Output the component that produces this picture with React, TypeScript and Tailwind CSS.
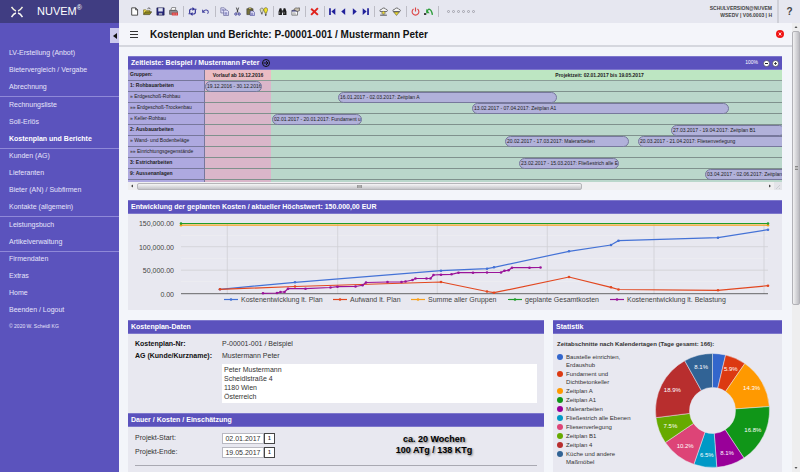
import type { ReactNode } from 'react';

const menu = [
  ['LV-Erstellung (Anbot)', 'Bietervergleich / Vergabe', 'Abrechnung'],
  ['Rechnungsliste', 'Soll-Erlös', 'Kostenplan und Berichte'],
  ['Kunden (AG)', 'Lieferanten', 'Bieter (AN) / Subfirmen', 'Kontakte (allgemein)'],
  ['Leistungsbuch', 'Artikelverwaltung'],
  ['Firmendaten', 'Extras', 'Home', 'Beenden / Logout'],
];

const toolbar: { name: string; art: ReactNode }[][] = [
  [
    { name: 'Neu', art: <path d="M3 1.5h7l3.5 3.5v9.5H3zM10 1.5V5h3.5" fill="#fff" stroke="#333" strokeWidth="1.5" /> },
    {
      name: 'Öffnen',
      art: (
        <>
          <path d="M1 13V5h4l1 1h6v3" fill="#f4e04a" stroke="#55501a" />
          <path d="M1 13.5 4 8.500h11.500L12 13.500z" fill="#8a8420" stroke="#33300c" />
          <path d="M8 3c2-2 4-1.500 5.500 1" fill="none" stroke="#222" strokeWidth="1.300" />
        </>
      ),
    },
    {
      name: 'Speichern',
      art: (
        <>
          <path d="M1.500 1.500h13v13h-13z" fill="#26267c" stroke="#15153f" />
          <path d="M4 2h8v6H4z" fill="#dfe3ef" />
          <path d="M5 10.500h6V14H5z" fill="#9da0b5" />
        </>
      ),
    },
    {
      name: 'Drucken',
      art: (
        <>
          <path d="M5 1h7l-1 5H3z" fill="#fff" stroke="#444" />
          <path d="M1 6h13l1 2v5H1z" fill="#8c8c92" stroke="#333" />
          <path d="M5 10h11v5H5z" fill="#d63434" />
          <path d="M6.500 12.500h8" stroke="#fff" strokeDasharray="2 1" />
        </>
      ),
    },
  ],
  [
    {
      name: 'Aktualisieren',
      art: (
        <>
          <path d="M3 11V5.500L5 3.500h4M13 5v5.500l-2 2H7" fill="none" stroke="#2a2a92" strokeWidth="2" />
          <path d="M8 0v7l4-3.500zM8 9v7l-4-3.500z" fill="#2a2a92" />
          <path d="M1 11h4v2H1zM11 3h4v2h-4z" fill="#2a2a92" />
        </>
      ),
    },
    {
      name: 'Rückgängig',
      art: (
        <>
          <path d="M4 8c3-4 9-3 9 1 0 1-.5 2-1.500 3" fill="none" stroke="#4646a0" strokeWidth="1.800" />
          <path d="M2 4v6h6z" fill="#4646a0" />
        </>
      ),
    },
  ],
  [
    {
      name: 'Kopieren',
      art: (
        <>
          <path d="M1.500 1.500h6l2 2v7h-8z" fill="#eef" stroke="#3b3b7c" />
          <path d="M6.500 5.500h6l2.500 2.500v7H6.500z" fill="#eef" stroke="#3b3b7c" />
          <path d="M3 4.500h4M3 6.500h3M8 9.500h5M8 11.500h5M8 13h5" stroke="#5a5aa8" />
        </>
      ),
    },
    {
      name: 'Ausschneiden',
      art: (
        <>
          <path d="M6 1l3 9M10 1 7 10" stroke="#333" strokeWidth="1.500" />
          <circle cx="5" cy="12.500" r="2" fill="none" stroke="#2b2b8c" strokeWidth="1.500" />
          <circle cx="11" cy="12.500" r="2" fill="none" stroke="#2b2b8c" strokeWidth="1.500" />
        </>
      ),
    },
    {
      name: 'Einfügen',
      art: (
        <>
          <path d="M1.500 3h11v10.500h-11z" fill="#77733a" stroke="#333" />
          <path d="M4.500 1.500h5v3h-5z" fill="#e8d95a" stroke="#333" />
          <path d="M7.500 7h5l2.500 2.500V15H7.500z" fill="#eef" stroke="#2b2b8c" />
          <path d="M9 11h4M9 13h4" stroke="#2b2b8c" />
        </>
      ),
    },
    {
      name: 'Suchhilfe',
      art: (
        <>
          <path d="M2 5c0-4 6-4 6 0 0 2-1.500 3-1.500 5h-3C3.500 8 2 7 2 5z" fill="#dcdcc0" stroke="#444" />
          <path d="M8.500 5c0-5 7-5 7 0 0 2-2 3-2 6h-3c0-3-2-4-2-6z" fill="#f0e326" stroke="#55501a" />
          <path d="M3.500 12h3M10.500 13h3M11 15h2" stroke="#222" strokeWidth="1.500" />
        </>
      ),
    },
  ],
  [
    {
      name: 'Suchen',
      art: (
        <>
          <path d="M3 2h3l1 4v8H1V8zM13 2h-3L9 6v8h6V8z" fill="#1c1c1c" />
          <path d="M7 6h2v4H7z" fill="#444" />
          <path d="M3 8.500v4M11 8.500v4" stroke="#aaa" />
        </>
      ),
    },
    {
      name: 'Eigenschaften',
      art: (
        <>
          <path d="M1.500 6h10v8.500h-10z" fill="#fff" stroke="#333" />
          <path d="M1.500 6h10v2h-10z" fill="#34347c" />
          <path d="M5 5c1-3 4-4 6-3l4-.500v5L11 8 8 6z" fill="#c9c0ae" stroke="#333" />
          <path d="M3 10.500h5M3 12.500h6" stroke="#777" />
        </>
      ),
    },
  ],
  [{ name: 'Löschen', art: <path d="M2 3l12 11M14 2 2 14" stroke="#e0221c" strokeWidth="3.500" /> }],
  [
    { name: 'Erster', art: <path d="M2 2h3v12H2zM13 2v12L6 8z" fill="#20209a" /> },
    { name: 'Zurück', art: <path d="M11 2v12L4 8z" fill="#20209a" /> },
    { name: 'Weiter', art: <path d="M5 2v12l7-6z" fill="#20209a" /> },
    { name: 'Letzter', art: <path d="M11 2h3v12h-3zM3 2v12l7-6z" fill="#20209a" /> },
  ],
  [
    {
      name: 'Hochladen',
      art: (
        <>
          <path d="M2 8c-1-3 1-4 3-4 1-3 6-3 7 0 3 0 4 3 2 4z" fill="#f4f4f4" stroke="#444" strokeWidth="1.300" />
          <path d="M8 7l4 4h-2.500v2h-3v-2H4z" fill="#eedb30" stroke="#555" strokeWidth=".8" />
          <path d="M2 14.500h12" stroke="#333" strokeWidth="1.500" />
        </>
      ),
    },
    {
      name: 'Herunterladen',
      art: (
        <>
          <path d="M2 8c-1-3 1-4 3-4 1-3 6-3 7 0 3 0 4 3 2 4z" fill="#f4f4f4" stroke="#444" strokeWidth="1.300" />
          <path d="M3 9h10l-5 6z" fill="#eedb30" stroke="#444" />
        </>
      ),
    },
  ],
  [
    {
      name: 'Beenden',
      art: <path d="M4.500 3.500a6 6 0 1 0 7 0M8 1v7" fill="none" stroke="#dc4545" strokeWidth="2" />,
    },
    {
      name: 'Verlauf',
      art: (
        <>
          <path d="M5 9c2-8 8-6 10 5" fill="none" stroke="#2f9f3d" strokeWidth="2.500" />
          <path d="M0 11h4v3H0z" fill="#222" />
          <path d="M4 3v8h6z" fill="#2f9f3d" />
        </>
      ),
    },
  ],
];

const dayWidth = 4.76;

// from / to are days counted from 19.12.2016
const groups = [
  { name: '1: Rohbauarbeiten', bold: true, bars: [{ from: 0, to: 12, text: '19.12.2016 - 30.12.2016' }] },
  { name: '» Erdgeschoß-Rohbau', bars: [{ from: 28, to: 74, text: '16.01.2017 - 02.03.2017: Zeitplan A' }] },
  { name: '»» Erdgeschoß-Trockenbau', bars: [{ from: 56, to: 110, text: '13.02.2017 - 07.04.2017: Zeitplan A1' }] },
  { name: '» Keller-Rohbau', bars: [{ from: 14, to: 33, text: '02.01.2017 - 20.01.2017: Fundament u' }] },
  { name: '2: Ausbauarbeiten', bold: true, bars: [{ from: 98, to: 122, text: '27.03.2017 - 19.04.2017: Zeitplan B1' }] },
  {
    name: '» Wand- und Bodenbeläge',
    bars: [
      { from: 63, to: 89, text: '20.02.2017 - 17.03.2017: Malerarbeiten' },
      { from: 91, to: 124, text: '20.03.2017 - 21.04.2017: Fliesenverlegung' },
    ],
  },
  { name: '»» Einrichtungsgegenstände', bars: [] },
  { name: '3: Estricharbeiten', bold: true, bars: [{ from: 66, to: 87, text: '23.02.2017 - 15.03.2017: Fließestrich alle E' }] },
  { name: '9: Aussenanlagen', bold: true, bars: [{ from: 105, to: 166, text: '03.04.2017 - 02.06.2017: Zeitplan' }] },
];

const lines = [
  {
    color: '#f9a11b',
    points: [[53, 11.2], [640, 11.2]],
  },
  {
    color: '#1f9d2b',
    points: [[53, 9.5], [640, 9.5]],
  },
  {
    color: '#4472d6',
    points: [[92, 75.300], [167, 68.300], [313, 56.700], [359, 54.700], [366, 53.300], [441, 37.300], [483, 31], [490.500, 26.700], [590, 23.700], [640, 15.700]],
  },
  {
    color: '#e2471f',
    points: [[92, 75.300], [167, 72.500], [313, 68], [359, 77.500], [366, 78.700], [441, 63], [483, 73.300], [490.500, 75.500], [590, 76.300], [640, 71.700]],
  },
  {
    color: '#9a1499',
    points: [
      [135, 79.300], [149, 79], [152.500, 78], [156.500, 78], [160, 74.700], [177.500, 74.700], [202.500, 73.500], [209.500, 72.700], [227.500, 72.500],
      [234.500, 71.300], [238, 68.500], [259.500, 68], [273.500, 68], [277.500, 67.500], [284.500, 66], [287.500, 64.500], [298.500, 64.500],
      [302.500, 64.500], [305.500, 61], [313, 60.700], [323.500, 60.300], [330.500, 58.700], [345, 58.700], [359, 58.500], [373, 58.500],
      [376.500, 56.700], [380.500, 56.300], [384, 53.700], [401.500, 53.700], [412.500, 53.500],
    ],
  },
];

const chartLegend = [
  { x: 96, color: '#4472d6', text: 'Kostenentwicklung lt. Plan' },
  { x: 205, color: '#e2471f', text: 'Aufwand lt. Plan' },
  { x: 283, color: '#f9a11b', text: 'Summe aller Gruppen' },
  { x: 380, color: '#1f9d2b', text: 'geplante Gesamtkosten' },
  { x: 482, color: '#9a1499', text: 'Kostenentwicklung lt. Belastung' },
];

const shares = [
  { text: 'Baustelle einrichten, Erdaushub', value: 3.7, color: '#3366cc' },
  { text: 'Fundament und Dichtbetonkeller', value: 5.9, color: '#dc3912' },
  { text: 'Zeitplan A', value: 14.3, color: '#ff9900' },
  { text: 'Zeitplan A1', value: 16.8, color: '#109618' },
  { text: 'Malerarbeiten', value: 8.1, color: '#990099' },
  { text: 'Fließestrich alle Ebenen', value: 6.5, color: '#0099c6' },
  { text: 'Fliesenverlegung', value: 10.2, color: '#dd4477' },
  { text: 'Zeitplan B1', value: 7.5, color: '#66aa00' },
  { text: 'Zeitplan 4', value: 18.9, color: '#b82e2e' },
  { text: 'Küche und andere Maßmöbel', value: 8.1, color: '#316395' },
];

function Sidebar() {
  return (
    <aside className="relative flex w-[119px] shrink-0 flex-col bg-[#5b53bd] text-[7px] text-[#e6e4fa]">
      <div className="flex h-[23px] shrink-0 items-center bg-[#403d82] pl-[11px] text-[11px] text-white">
        <svg viewBox="0 0 24 24" className="mr-[14px] size-3" fill="none" strokeWidth="3">
          <path d="M1 2c3 5 5 7 9 8M23 2c-3 5-5 7-9 8" stroke="#f2f0df" />
          <path d="M1 22c3-5 5-7 9-8M23 22c-3-5-5-7-9-8" stroke="#f8f8f4" />
        </svg>
        NUVEM<sup className="text-[7px]">®</sup>
      </div>
      <button
        type="button"
        aria-label="Menü einklappen"
        className="absolute right-0 top-7 flex h-[15px] w-[9px] items-center justify-center bg-[#cbc9ed]"
      >
        <svg viewBox="0 0 4 6" className="h-[6px] w-1">
          <path d="M4 0v6L0 3z" fill="#111" />
        </svg>
      </button>
      <nav className="mt-[22px]">
        {menu.map((items) => (
          <ul key={items[0]} className="border-[#8f89d8] not-last:border-b even:-mb-px">
            {items.map((item) => (
              <li key={item}>
                <a
                  href="#"
                  className={
                    item === 'Kostenplan und Berichte'
                      ? 'flex h-[17px] items-center pl-[9px] font-bold text-white'
                      : 'flex h-[17px] items-center pl-[9px]'
                  }
                >
                  {item}
                </a>
              </li>
            ))}
          </ul>
        ))}
      </nav>
      <p className="pl-[9px] pt-[3px] text-[5px] leading-[8px]">© 2020 W. Scheidl KG</p>
    </aside>
  );
}

function Topbar() {
  return (
    <header className="flex h-[23px] shrink-0 items-center bg-[#e6e7f0] pl-[9px]">
      {toolbar.map((group, i) => (
        <div key={i} className="flex items-center">
          {group.map(({ name, art }) => (
            <button
              key={name}
              type="button"
              aria-label={name}
              className={i === 5 ? 'flex w-[11px] justify-center' : 'flex w-[13px] justify-center'}
            >
              <svg viewBox="0 0 16 16" className="size-[9px]">
                {art}
              </svg>
            </button>
          ))}
          <span className="ml-[3px] mr-[2px] h-[11px] w-px bg-[#bdbdc6]" />
        </div>
      ))}
      <div className="ml-[6px] flex gap-[2px]">
        {[1, 2, 3, 4, 5, 6].map((n) => (
          <span key={n} className="size-[3px] rounded-full border border-[#a2a2ac]" />
        ))}
      </div>
      <p className="ml-auto pr-[5px] text-right text-[5px] font-bold leading-[7px] text-[#444]">
        SCHULVERSION@NUVEM
        <br />
        WSEDV | V06.0003 | H
      </p>
      <button
        type="button"
        className="flex h-full w-[23px] items-center justify-center border-l-2 border-[#cfd0d8] text-[10px] font-bold text-[#444]"
      >
        ?
      </button>
    </header>
  );
}

function SectionHead({ children }: { children: ReactNode }) {
  return (
    <h2 className="flex h-[14px] items-center border-y border-[#7d77cc] bg-[#5b52bd] px-[3px] text-[7px] font-bold text-white">
      {children}
    </h2>
  );
}

function Timeline() {
  return (
    <section>
      <SectionHead>
        Zeitleiste: Beispiel / Mustermann Peter
        <svg viewBox="0 0 16 16" className="ml-[3px] size-2" fill="none" stroke="#111" strokeWidth="2">
          <circle cx="8" cy="8" r="7" />
          <path d="M3 8h9M8 4l4 4-4 4" />
        </svg>
        <span className="ml-auto mr-[5px] text-[5px] font-normal">100%</span>
        <button type="button" aria-label="Verkleinern" className="mr-[2px]">
          <svg viewBox="0 0 14 14" className="size-[7px]">
            <circle cx="7" cy="7" r="6" fill="#fff" stroke="#222" />
            <path d="M4 7h6" stroke="#222" strokeWidth="2" />
          </svg>
        </button>
        <button type="button" aria-label="Vergrößern">
          <svg viewBox="0 0 14 14" className="size-[7px]">
            <circle cx="7" cy="7" r="6" fill="#fff" stroke="#222" />
            <path d="M4 7h6M7 4v6" stroke="#222" strokeWidth="1.500" />
          </svg>
        </button>
      </SectionHead>
      <div className="flex h-[112px] overflow-hidden text-[5px] text-[#222]">
        <div className="w-[77px] shrink-0 border-r border-[#77779c] bg-[#aea9e0]">
          <div className="flex h-[11px] items-center border-b border-[#77779c] pl-[2px] font-bold">Gruppen:</div>
          {groups.map((g) => (
            <div
              key={g.name}
              className={
                g.bold
                  ? 'flex h-[11px] items-center whitespace-nowrap border-b border-[#77779c] pl-[2px] font-bold'
                  : 'flex h-[11px] items-center whitespace-nowrap border-b border-[#77779c] pl-[2px]'
              }
            >
              {g.name}
            </div>
          ))}
        </div>
        <div className="min-w-0 flex-1 overflow-hidden bg-linear-to-r from-[#dab6ca] from-[66px] to-[#bad7cb] to-[66px]">
          <div className="flex h-[11px] border-b border-[#8a9c97] font-bold leading-[11px]">
            <div className="w-[66px] shrink-0 bg-[#ebbcc3] text-center">Vorlauf ab 19.12.2016</div>
            <div className="flex-1 bg-[#bde6c2] pl-[146px] text-center">Projektzeit: 02.01.2017 bis 19.05.2017</div>
          </div>
          {groups.map((g) => (
            <div key={g.name} className="relative h-[11px] border-b border-[#7f918d]">
              {g.bars.map((bar) => (
                <div
                  key={bar.text}
                  className="absolute top-0 h-[11px] overflow-hidden whitespace-nowrap rounded-full border border-[#77789c] bg-[#b1b1da] pl-px leading-[9px]"
                  style={{ left: Math.round(bar.from * dayWidth), width: Math.round((bar.to - bar.from) * dayWidth) }}
                >
                  {bar.text}
                </div>
              ))}
            </div>
          ))}
        </div>
      </div>
      <div className="flex h-2 items-center bg-[#efeff1]">
        <svg viewBox="0 0 9 8" className="h-2 w-[9px]">
          <path d="M5 2.500v3L3 4z" fill="#444" />
        </svg>
        <div className="flex h-[7px] w-[68%] items-center justify-center rounded-xs border border-[#b5b5b9] bg-linear-to-b from-[#f5f5f6] to-[#c5c5c9]">
          <span className="h-[3px] w-[5px] border-x border-[#999] bg-[#aaa]" />
        </div>
        <svg viewBox="0 0 24 8" className="ml-auto h-2 w-6">
          <path d="M11 2.500v3L13 4z" fill="#444" />
          <path d="M16 0h8v8h-8z" fill="#e3e4e9" />
          <path d="M22 3l-4 4M22 6l-1 1" stroke="#c2c3ca" strokeWidth=".7" />
        </svg>
      </div>
    </section>
  );
}

function CostChart() {
  return (
    <section className="bg-[#e8e8f0]">
      <SectionHead>Entwicklung der geplanten Kosten / aktueller Höchstwert: 150.000,00 EUR</SectionHead>
      <svg viewBox="0 0 654 96" className="block w-full" fontSize="7" fill="#444">
        <path d="M53 21.500h587M53 44.500h587M53 67.500h587" stroke="#eeeef2" strokeWidth=".6" />
        <path d="M53 32.700h587M53 56.200h587M99.300 10v70M209.700 10v70M309.300 10v70M419.300 10v70M526 10v70M636 10v70" stroke="#cfcfd4" strokeWidth=".8" />
        <path d="M53 79.700h587" stroke="#444" strokeWidth=".8" />
        <g textAnchor="end">
          <text x="46" y="12">150,000.00</text>
          <text x="46" y="35.500">100,000.00</text>
          <text x="46" y="59">50,000.00</text>
          <text x="46" y="82.500">0.00</text>
        </g>
        {lines.map((line) => (
          <g key={line.color}>
            <polyline points={line.points.map((p) => p.join(',')).join(' ')} fill="none" stroke={line.color} strokeWidth="1.200" />
            {line.points.map(([x, y], i) => (
              <circle key={i} cx={x} cy={y} r="1.300" fill={line.color} />
            ))}
          </g>
        ))}
        {chartLegend.map((l) => (
          <g key={l.text}>
            <path d={`M${l.x} 85.500h14`} stroke={l.color} strokeWidth="1.200" />
            <circle cx={l.x + 7} cy="85.500" r="1.300" fill={l.color} />
            <text x={l.x + 17} y="88">{l.text}</text>
          </g>
        ))}
      </svg>
    </section>
  );
}

function DateRow({ id, label, value }: { id: string; label: string; value: string }) {
  return (
    <div className="flex h-[14px] items-center">
      <label htmlFor={id} className="w-[87px]">
        {label}
      </label>
      <input id={id} defaultValue={value} className="h-[11px] w-[42px] border border-[#b9b9c2] bg-white text-center text-[7px]" />
      <button type="button" aria-label={`${label} wählen`} className="flex h-[11px] w-[11px] items-center justify-center border border-[#444] bg-white text-[5px] font-bold leading-none">
        1
      </button>
    </div>
  );
}

function ProjectData() {
  return (
    <div className="min-w-0 flex-1 bg-[#e8e8f0] pb-5 text-[7px] text-[#333]">
      <SectionHead>Kostenplan-Daten</SectionHead>
      <dl className="grid grid-cols-[87px_1fr] px-[7px] pb-[10px] pt-1 leading-[12px]">
        <dt className="font-bold text-[#111]">Kostenplan-Nr:</dt>
        <dd>P-00001-001 / Beispiel</dd>
        <dt className="font-bold text-[#111]">AG (Kunde/Kurzname):</dt>
        <dd>Mustermann Peter</dd>
        <dd className="col-start-2 mt-[2px]">
          <textarea
            aria-label="Adresse"
            rows={4}
            className="block h-[39px] w-full resize-none bg-white px-[2px] py-px text-[7px] leading-[9px]"
            defaultValue={'Peter Mustermann\nScheidlstraße 4\n1180 Wien\nÖsterreich'}
          />
        </dd>
      </dl>
      <SectionHead>Dauer / Kosten / Einschätzung</SectionHead>
      <div className="mx-[7px] flex border-b border-[#a9a9b2] pb-[6px] pt-1">
        <div>
          <DateRow id="start" label="Projekt-Start:" value="02.01.2017" />
          <DateRow id="ende" label="Projekt-Ende:" value="19.05.2017" />
        </div>
        <p className="flex-1 pl-14 pt-[3px] text-center text-[9px] font-bold leading-[11px] text-black [text-shadow:1px_1px_2px_#777]">
          ca. 20 Wochen
          <br />
          100 ATg / 138 KTg
        </p>
      </div>
    </div>
  );
}

function Donut() {
  let sum = 0;
  const at = (share: number, r: number) => {
    const a = (share / 100) * Math.PI * 2;
    return [57.5 + r * Math.sin(a), 57.5 - r * Math.cos(a)];
  };
  return (
    <svg viewBox="0 0 115 115" className="mt-1 size-[115px] shrink-0" fontSize="6" fill="#fff" textAnchor="middle">
      {shares.map((s) => {
        const from = sum;
        sum += s.value;
        const big = s.value > 50 ? 1 : 0;
        const [lx, ly] = at(from + s.value / 2, 45);
        return (
          <g key={s.text}>
            <path
              d={`M${at(from, 57)}A57 57 0 ${big} 1 ${at(sum, 57)}L${at(sum, 23)}A23 23 0 ${big} 0 ${at(from, 23)}Z`}
              fill={s.color}
              stroke="#e8e8f0"
              strokeWidth=".5"
            />
            {s.value > 5 && (
              <text x={lx} y={ly + 2}>
                {s.value}%
              </text>
            )}
          </g>
        );
      })}
    </svg>
  );
}

function Statistics() {
  return (
    <section className="w-[35%] shrink-0 bg-[#e8e8f0] text-[6px] text-[#333]">
      <SectionHead>Statistik</SectionHead>
      <h3 className="px-1 pt-[5px] font-bold leading-[10px]">Zeitabschnitte nach Kalendertagen (Tage gesamt: 166):</h3>
      <div className="flex justify-between pl-1 pr-3">
        <ul className="mt-1 flex w-[86px] flex-col gap-px leading-[8px]">
          {shares.map((s) => (
            <li key={s.text} className="flex gap-[3px]">
              <span className="mt-px size-[6px] shrink-0 rounded-full" style={{ background: s.color }} />
              {s.text}
            </li>
          ))}
        </ul>
        <Donut />
      </div>
    </section>
  );
}

export default function App() {
  return (
    <div className="flex h-screen overflow-hidden bg-[#f3f5fa] font-['Liberation_Sans',Arial,sans-serif]">
      <Sidebar />
      <div className="flex min-w-0 flex-1 flex-col">
        <Topbar />
        <div className="flex min-h-0 flex-1">
          <main className="min-w-0 flex-1 overflow-hidden">
            <div className="flex h-6 items-center border-b-2 border-[#d5d7de] bg-[#f4f5fa] pl-[11px] pr-2">
              <button type="button" aria-label="Menü">
                <svg viewBox="0 0 8 7" className="h-[7px] w-2" stroke="#333">
                  <path d="M0 .5h8M0 3.500h8M0 6.500h8" />
                </svg>
              </button>
              <h1 className="ml-3 text-[10px] font-bold text-[#111]">Kostenplan und Berichte: P-00001-001 / Mustermann Peter</h1>
              <button type="button" aria-label="Schließen" className="ml-auto">
                <svg viewBox="0 0 16 16" className="size-2">
                  <circle cx="8" cy="8" r="8" fill="#f01414" />
                  <path d="M5.500 5l5 6M10.500 5l-5 6" stroke="#fff" strokeWidth="1.800" />
                </svg>
              </button>
            </div>
            <div className="flex flex-col gap-[10px] pl-[9px] pr-[10px] pt-[9px]">
              <Timeline />
              <CostChart />
              <div className="flex gap-[9px]">
                <ProjectData />
                <Statistics />
              </div>
            </div>
          </main>
          <div className="flex w-2 shrink-0 flex-col items-center bg-[#eeeeef]">
            <svg viewBox="0 0 8 8" className="size-2 shrink-0">
              <path d="M2.500 5h3L4 3z" fill="#555" />
            </svg>
            <div className="flex h-[61%] w-full items-center justify-center rounded-xs border border-[#b2b2b7] bg-linear-to-r from-[#f2f2f3] to-[#bdbdc2]">
              <span className="h-1 w-[3px] border-y border-[#888] bg-[#bbb]" />
            </div>
            <svg viewBox="0 0 8 8" className="mt-auto size-2 shrink-0">
              <path d="M2.500 3h3L4 5z" fill="#555" />
            </svg>
          </div>
        </div>
      </div>
    </div>
  );
}
